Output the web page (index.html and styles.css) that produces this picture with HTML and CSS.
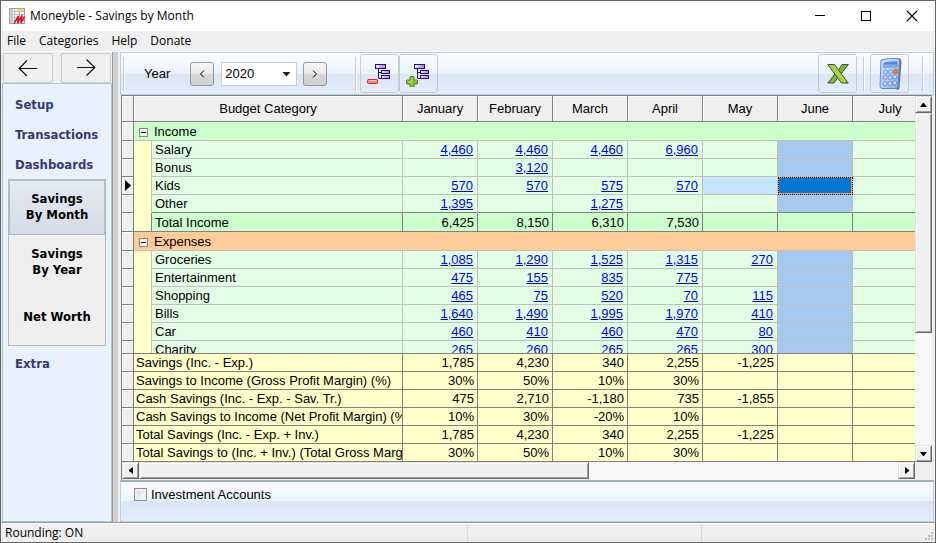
FILE: index.html
```html
<!DOCTYPE html>
<html lang="en">
<head>
<meta charset="utf-8">
<title>Moneyble - Savings by Month</title>
<link rel="stylesheet" href="styles.css">
</head>
<body>
<div class="window">
  <header class="titlebar">
    <svg class="app-icon" width="16" height="16" viewBox="0 0 16 16">
      <rect x="0.5" y="0.5" width="15" height="15" fill="#f4f4f4" stroke="#a0a4a8"/>
      <path d="M1 3.5h14M1 6.5h14M1 9.5h14M1 12.5h14M5.500 1v14M10.500 1v14" stroke="#b8bcc0" fill="none"/>
      <path d="M1 1h3v14h-3z" fill="#c5c9cc"/>
      <path d="M8 1h7v2h-7z" fill="#ffd35a"/>
      <path d="M5 15.500L9.500 8L8.500 15L13 7.500L12 15L15.500 8.500" stroke="#d8151b" stroke-width="1.500" fill="none"/>
    </svg>
    <h1>Moneyble - Savings by Month</h1>
    <div class="window-controls">
      <button aria-label="Minimize"><svg width="12" height="12"><path d="M1 5.500h10" stroke="#000"/></svg></button>
      <button aria-label="Maximize"><svg width="12" height="12"><rect x="1.500" y="1.500" width="9" height="9" fill="none" stroke="#000"/></svg></button>
      <button aria-label="Close"><svg width="12" height="12"><path d="M1 1l10 10M11 1l-10 10" stroke="#000" stroke-width="1.100"/></svg></button>
    </div>
  </header>
  <nav class="menubar">
    <button>File</button><button>Categories</button><button>Help</button><button>Donate</button>
  </nav>

  <div class="workspace">
    <aside class="sidebar">
      <div class="history">
        <button aria-label="Back"><svg width="20" height="18" viewBox="0 0 20 18"><path d="M19 9.500H1.500M9 1.500L1.200 9.500L9 17" fill="none" stroke="#111" stroke-width="1.200"/></svg></button>
        <button aria-label="Forward"><svg width="20" height="18" viewBox="0 0 20 18"><path d="M1 8.500H18.500M10.500 0.500L18.800 8.500L10.500 16.500" fill="none" stroke="#111" stroke-width="1.200"/></svg></button>
      </div>
      <nav class="sections">
        <a class="section" href="#setup">Setup</a>
        <a class="section" href="#transactions">Transactions</a>
        <a class="section" href="#dashboards">Dashboards</a>
        <div class="pages">
          <a class="page active" href="#month">Savings<br>By Month</a>
          <a class="page" href="#year">Savings<br>By Year</a>
          <a class="page" href="#worth">Net Worth</a>
        </div>
        <a class="section" href="#extra">Extra</a>
      </nav>
    </aside>
    <div class="splitter"></div>

    <main class="main">
      <div class="toolbar">
        <span class="divider"></span>
        <label for="year">Year</label>
        <button class="step" aria-label="Previous year"><svg width="6" height="8"><path d="M5 0.500L1.500 4L5 7.500" fill="none" stroke="#000"/></svg></button>
        <div class="year-box">
          <select id="year"><option>2020</option></select>
          <svg class="caret" width="9" height="5"><path d="M0.500 0h8l-4 4.500z" fill="#222"/></svg>
        </div>
        <button class="step" aria-label="Next year"><svg width="6" height="8"><path d="M1 0.500L4.500 4L1 7.500" fill="none" stroke="#000"/></svg></button>
        <span class="divider before-tools"></span>
        <button class="tool" aria-label="Collapse all">
          <svg width="26" height="26" viewBox="0 0 26 26">
            <defs><linearGradient id="node"><stop offset="0" stop-color="#f2edff"/><stop offset="1" stop-color="#9d82ea"/></linearGradient></defs>
            <path d="M11.500 7v10.500h3M11.500 11.500h3" fill="none" stroke="#241080"/>
            <g fill="url(#node)" stroke="#241080"><rect x="8.500" y="3.500" width="10" height="4"/><rect x="14.500" y="9.500" width="8" height="3"/><rect x="14.500" y="14.500" width="8" height="3"/></g>
            <rect x="0.500" y="18.500" width="10" height="4" rx="1" fill="#ee9278" stroke="#f01818"/><path d="M2 19.500h7" stroke="#f9cfaa"/>
          </svg>
        </button>
        <button class="tool" aria-label="Expand all">
          <svg width="26" height="26" viewBox="0 0 26 26">
            <path d="M11.500 7v10.500h3M11.500 11.500h3" fill="none" stroke="#241080"/>
            <g fill="url(#node)" stroke="#241080"><rect x="8.500" y="3.500" width="10" height="4"/><rect x="14.500" y="9.500" width="8" height="3"/><rect x="14.500" y="14.500" width="8" height="3"/></g>
            <path d="M4.500 15.500h3l.5.500v3h3l.5.500v3l-.5.500h-3v2.500l-.5.500h-3l-.5-.5v-2.500h-3l-.5-.5v-3l.5-.5h3v-3z" fill="#8dc32c" stroke="#41801a"/><path d="M5.500 17v4h-3.500" fill="none" stroke="#b8e060"/>
          </svg>
        </button>
        <button class="tool push" aria-label="Export to Excel">
          <svg width="22" height="20" viewBox="0 0 22 20">
            <path d="M15 0.500h6.300l-6.500 8.500h-5z" fill="#79b83a" stroke="#3e5a2c"/>
            <path d="M0.800 19L8 10h5.500L7 19z" fill="#79b83a" stroke="#3e5a2c"/>
            <path d="M0.800 0.500H7.500L21.200 19H14.500z" fill="#a2d83e" stroke="#44513c"/>
          </svg>
        </button>
        <span class="divider"></span>
        <button class="tool" aria-label="Calculator">
          <svg width="24" height="34" viewBox="0 0 24 34">
            <defs><linearGradient id="calc" x2="1" y2="1"><stop offset="0" stop-color="#d9e8ff"/><stop offset="1" stop-color="#86abe9"/></linearGradient>
            <linearGradient id="lcd" x2="0" y2="1"><stop offset="0" stop-color="#2f6fe2"/><stop offset="1" stop-color="#a9d0ff"/></linearGradient></defs>
            <path d="M21 2q1.500 .5 1.500 3L20.500 31q-.5 1-2 1" fill="none" stroke="#66748e" stroke-width="2"/>
            <path d="M3 3q9-2.500 17-1.500q1.500.5 1.500 3L20 30q-.5 1.500-2 1.500L4 31.500q-2-.5-2-2z" fill="url(#calc)" stroke="#5f8ad2"/>
            <path d="M6 6q7-1.500 13-1v5q-6-.5-13.300.5z" fill="url(#lcd)" stroke="#5585cf" stroke-width=".8"/>
            <g fill="#c4dafc" stroke="#5d84ca" stroke-width=".8"><circle cx="7.500" cy="15" r="2"/><circle cx="12.500" cy="15" r="2"/><circle cx="7.200" cy="20.500" r="2"/><circle cx="12.200" cy="20.500" r="2"/><circle cx="17" cy="20" r="2"/><circle cx="7" cy="26.500" r="2"/><circle cx="12" cy="26.500" r="2"/><circle cx="16.800" cy="26" r="2"/></g>
            <circle cx="17.500" cy="14.500" r="2.200" fill="#f07838" stroke="#d0602c" stroke-width=".8"/>
          </svg>
        </button>
        <span class="divider last"></span>
      </div>

      <div class="grid">
        <div class="panes">
          <div class="tables">
            <div class="rows">
              <table>
                <colgroup><col class="c-ind"><col class="c-tree"><col class="c-name"><col class="c-m"><col class="c-m"><col class="c-m"><col class="c-m"><col class="c-m"><col class="c-m"><col></colgroup>
                <thead>
                  <tr><td class="ind"></td><th colspan="2">Budget Category</th><th>January</th><th>February</th><th>March</th><th>April</th><th>May</th><th>June</th><th>July</th></tr>
                </thead>
                <tbody>
                  <tr class="group income"><td class="ind"></td><td colspan="9"><button class="toggle" aria-label="Collapse Income"></button>Income</td></tr>
                  <tr class="item"><td class="ind"></td><td></td><td>Salary</td><td><a href="#e">4,460</a></td><td><a href="#e">4,460</a></td><td><a href="#e">4,460</a></td><td><a href="#e">6,960</a></td><td></td><td></td><td></td></tr>
                  <tr class="item"><td class="ind"></td><td></td><td>Bonus</td><td></td><td><a href="#e">3,120</a></td><td></td><td></td><td></td><td></td><td></td></tr>
                  <tr class="item"><td class="ind"><svg width="6" height="11"><path d="M0 0l6 5.500l-6 5.500z"/></svg></td><td></td><td>Kids</td><td><a href="#e">570</a></td><td><a href="#e">570</a></td><td><a href="#e">575</a></td><td><a href="#e">570</a></td><td class="near"></td><td class="focused"></td><td></td></tr>
                  <tr class="item before-total"><td class="ind"></td><td></td><td>Other</td><td><a href="#e">1,395</a></td><td></td><td><a href="#e">1,275</a></td><td></td><td></td><td></td><td></td></tr>
                  <tr class="total"><td class="ind"></td><td></td><td>Total Income</td><td>6,425</td><td>8,150</td><td>6,310</td><td>7,530</td><td></td><td></td><td></td></tr>
                  <tr class="group expenses"><td class="ind"></td><td colspan="9"><button class="toggle" aria-label="Collapse Expenses"></button>Expenses</td></tr>
                  <tr class="item"><td class="ind"></td><td></td><td>Groceries</td><td><a href="#e">1,085</a></td><td><a href="#e">1,290</a></td><td><a href="#e">1,525</a></td><td><a href="#e">1,315</a></td><td><a href="#e">270</a></td><td></td><td></td></tr>
                  <tr class="item"><td class="ind"></td><td></td><td>Entertainment</td><td><a href="#e">475</a></td><td><a href="#e">155</a></td><td><a href="#e">835</a></td><td><a href="#e">775</a></td><td></td><td></td><td></td></tr>
                  <tr class="item"><td class="ind"></td><td></td><td>Shopping</td><td><a href="#e">465</a></td><td><a href="#e">75</a></td><td><a href="#e">520</a></td><td><a href="#e">70</a></td><td><a href="#e">115</a></td><td></td><td></td></tr>
                  <tr class="item"><td class="ind"></td><td></td><td>Bills</td><td><a href="#e">1,640</a></td><td><a href="#e">1,490</a></td><td><a href="#e">1,995</a></td><td><a href="#e">1,970</a></td><td><a href="#e">410</a></td><td></td><td></td></tr>
                  <tr class="item"><td class="ind"></td><td></td><td>Car</td><td><a href="#e">460</a></td><td><a href="#e">410</a></td><td><a href="#e">460</a></td><td><a href="#e">470</a></td><td><a href="#e">80</a></td><td></td><td></td></tr>
                  <tr class="item"><td class="ind"></td><td></td><td>Charity</td><td><a href="#e">265</a></td><td><a href="#e">260</a></td><td><a href="#e">265</a></td><td><a href="#e">265</a></td><td><a href="#e">300</a></td><td></td><td></td></tr>
                </tbody>
              </table>
            </div>
            <div class="summary">
              <table>
                <colgroup><col class="c-ind"><col class="c-wide"><col class="c-m"><col class="c-m"><col class="c-m"><col class="c-m"><col class="c-m"><col class="c-m"><col></colgroup>
                <tbody>
                  <tr><td class="ind"></td><td>Savings (Inc. - Exp.)</td><td>1,785</td><td>4,230</td><td>340</td><td>2,255</td><td>-1,225</td><td></td><td></td></tr>
                  <tr><td class="ind"></td><td>Savings to Income (Gross Profit Margin) (%)</td><td>30%</td><td>50%</td><td>10%</td><td>30%</td><td></td><td></td><td></td></tr>
                  <tr><td class="ind"></td><td>Cash Savings (Inc. - Exp. - Sav. Tr.)</td><td>475</td><td>2,710</td><td>-1,180</td><td>735</td><td>-1,855</td><td></td><td></td></tr>
                  <tr><td class="ind"></td><td>Cash Savings to Income (Net Profit Margin) (%)</td><td>10%</td><td>30%</td><td>-20%</td><td>10%</td><td></td><td></td><td></td></tr>
                  <tr><td class="ind"></td><td>Total Savings (Inc. - Exp. + Inv.)</td><td>1,785</td><td>4,230</td><td>340</td><td>2,255</td><td>-1,225</td><td></td><td></td></tr>
                  <tr><td class="ind"></td><td>Total Savings to (Inc. + Inv.) (Total Gross Margin)</td><td>30%</td><td>50%</td><td>10%</td><td>30%</td><td></td><td></td><td></td></tr>
                </tbody>
              </table>
            </div>
          </div>
          <div class="scroll vertical">
            <button aria-label="Scroll up"><svg width="7" height="4"><path d="M3 0h1l3 4h-7z"/></svg></button>
            <div class="thumb"></div>
            <div class="track"></div>
            <button aria-label="Scroll down"><svg width="7" height="4"><path d="M0 0h7l-3 4h-1z"/></svg></button>
          </div>
        </div>
        <div class="scroll horizontal">
          <button aria-label="Scroll left"><svg width="4" height="7"><path d="M4 0v7l-4-3v-1z"/></svg></button>
          <div class="thumb"></div>
          <div class="track"></div>
          <button aria-label="Scroll right"><svg width="4" height="7"><path d="M0 0v7l4-3v-1z"/></svg></button>
          <div class="corner"></div>
        </div>
      </div>

      <div class="options">
        <label><input type="checkbox">Investment Accounts</label>
      </div>
    </main>
  </div>

  <footer class="statusbar">
    <span>Rounding: ON</span><span></span><span></span>
    <svg class="grip" width="9" height="9"><path d="M6 0h2v2h-2zM3 3h2v2h-2zM6 3h2v2h-2zM0 6h2v2h-2zM3 6h2v2h-2zM6 6h2v2h-2z" fill="#bcbcbc"/></svg>
  </footer>
</div>
</body>
</html>
```
FILE: styles.css
```css
* { box-sizing: border-box; }
body { margin: 0; font: 13px/17px "Liberation Sans", Arial, sans-serif; color: #000; }
button { font: inherit; color: inherit; padding: 0; margin: 0; border: 0; background: none; }
svg { display: block; flex: none; }
a { color: inherit; text-decoration: none; }

.window { height: 100vh; display: flex; flex-direction: column; border: 1px solid #666; background: #efefef; overflow: hidden; }

.titlebar { display: flex; align-items: center; height: 30px; flex: none; padding-left: 8px; background: #fff; }
.titlebar h1 { margin: 0 0 0 5px; flex: 1; font: 12px/16px "Open Sans", sans-serif; }
.window-controls { display: flex; height: 100%; }
.window-controls button { width: 46px; display: flex; align-items: center; justify-content: center; }

.menubar { display: flex; height: 21px; flex: none; padding-left: 6px; gap: 13px; border-bottom: 1px solid #fff; font: 12px/20px "Open Sans", sans-serif; }

.workspace { display: flex; flex: 1; min-height: 0; border-bottom: 1px solid #9a9a9a; }

.sidebar { width: 111px; flex: none; display: flex; flex-direction: column; border-left: 1px solid #e4e4e4; }
.history { display: flex; justify-content: space-between; height: 31px; padding: 1px 1px 0; }
.history button { width: 50px; height: 30px; display: flex; align-items: center; justify-content: center; border: 1px solid #ccc; border-radius: 2px; background: #f0f0f0; }
.sections { flex: 1; padding: 5px 5px 0; border: 1px solid #acc8d0; background: #e8f1fe; font: bold 13px/16px "DejaVu Sans Condensed", "DejaVu Sans", sans-serif; }
.section { display: block; padding: 8px 7px 6px; color: #343a78; }
.pages { margin-bottom: 2px; border: 1px solid #b8b8b8; background: #efefef; }
.page { display: flex; height: 55px; padding-bottom: 2px; align-items: center; justify-content: center; text-align: center; }
.page.active { border: 1px solid #b4bbc9; background: linear-gradient(#e6eaf0, #d4dbe8); }

.splitter { width: 6px; flex: none; background: #cdcdcd; border-left: 1px solid #999; }
.main { flex: 1; min-width: 0; display: flex; flex-direction: column; margin: 0 1px 0 2px; }

.toolbar { display: flex; align-items: center; height: 43px; flex: none; border: 1px solid #b3d2d9; background: linear-gradient(#fdfeff, #eaf3fb 50%, #dae6f5 50%, #e3eefc); }
.divider { width: 2px; height: 34px; flex: none; background: #c8ccd2; border-right: 1px solid #fff; margin-left: 2px; }
.toolbar label { margin: 0 20px 0 19px; }
.step { width: 24px; height: 24px; flex: none; display: flex; align-items: center; justify-content: center; border: 1px solid #999; border-radius: 3px; background: linear-gradient(#f6f6f6, #eaeaea 50%, #d8d8d8 50%, #cfcfcf); }
.year-box { position: relative; margin: 0 6px 0 7px; }
.year-box select { display: block; width: 76px; height: 24px; padding: 0 3px; appearance: none; border: 1px solid #ccc; border-radius: 0; background: #fff; font: inherit; color: #000; }
.caret { position: absolute; right: 6px; top: 10px; pointer-events: none; }
.before-tools { margin: 0 3px 0 28px; }
.tool { width: 39px; height: 39px; flex: none; display: flex; align-items: center; justify-content: center; border: 1px solid #c4ccd4; border-radius: 3px; }
.tool.push { margin: 0 4px 0 auto; }
.push + .divider { margin-right: 5px; }
.divider.last { margin: 0 9px 0 13px; }

.grid { flex: 1; min-height: 0; display: flex; flex-direction: column; border: 1px solid #808080; border-width: 1px 0 0 1px; margin: 0 2px 0 1px; }
.panes { flex: 1; min-height: 0; display: flex; }
.tables { flex: 1; min-width: 0; display: flex; flex-direction: column; }
.rows { flex: 1; min-height: 0; overflow: hidden; background: #ffffc9; }
.summary { overflow: hidden; border-top: 1px solid #808080; }

table { width: 100%; min-width: 806px; table-layout: fixed; border-collapse: separate; border-spacing: 0; }
.c-ind { width: 12px; }
.c-tree { width: 18px; }
.c-name { width: 251px; }
.c-wide { width: 269px; }
.c-m { width: 75px; }
th, td { height: 18px; padding: 0 3px; overflow: hidden; white-space: nowrap; text-align: right; font-weight: normal; border: 0 solid #808080; border-width: 0 1px 1px 0; }
td.ind { padding: 0; background: #efefef; border-color: #808080; box-shadow: inset 1px 1px #fff; }
td.ind svg { margin-left: 3px; }
thead th { height: 26px; text-align: center; background: #efefef; box-shadow: inset 1px 1px #fff; }

.group td { height: 19px; text-align: left; padding-left: 5px; border-right-width: 0; }
.group td.ind, .total td.ind { padding: 0; border-right-width: 1px; }
.income td:last-child { background: #cfc; border-bottom-color: #c0c0c0; }
.expenses td:last-child { background: #fc9; border-bottom-color: #c0c0c0; }
.toggle { width: 9px; height: 9px; margin-right: 6px; vertical-align: 0; border: 1px solid #888; background: linear-gradient(#000, #000) center / 5px 1px no-repeat #fff; }

.item td { background: #e3ffe3; border-color: #c0c0c0; }
.item td.ind { background: #efefef; border-color: #808080; }
.item td:nth-child(2), .total td:nth-child(2) { background: #ffffc9; border-bottom-color: #ffffc9; }
.item td:nth-child(3), .total td:nth-child(3) { text-align: left; }
.item td:nth-child(9) { background: #a6c9ef; }
.item td.near { background: #c3e6fa; }
.item td.focused { background: #0078d7; box-shadow: inset 0 0 0 1px #ff9a4a; outline: 1px dotted #000; outline-offset: -1px; }
.item a { color: #00f; text-decoration: underline; margin-right: 1px; }
.before-total td:nth-child(n+3) { border-bottom-color: #808080; }
.total td { height: 19px; background: #cfc; }
.total td.ind { background: #efefef; }
.total td:nth-child(2) { border-bottom-color: #808080; }

.summary td { background: #ffffc9; line-height: 16px; padding-top: 1px; }
.summary td.ind { background: #efefef; }
.summary td:nth-child(2) { text-align: left; padding: 1px 0 0 2px; }

.scroll { display: flex; flex: none; }
.scroll button, .thumb { flex: none; border: 1px solid; border-color: #e3e3e3 #696969 #696969 #e3e3e3; box-shadow: inset 1px 1px #fff, inset -1px -1px #a0a0a0; background: #f0f0f0; }
.scroll button { width: 17px; height: 17px; display: flex; align-items: center; justify-content: center; }
.track { flex: 1; background: repeating-conic-gradient(#fff 0 25%, #f0f0f0 0 50%) 0 0 / 2px 2px; }
.vertical { flex-direction: column; width: 17px; }
.vertical .thumb { height: 60%; }
.horizontal { height: 18px; }
.horizontal .thumb { width: 55.5%; height: 17px; }
.corner { width: 17px; }

.options { height: 42px; flex: none; border: 1px solid #b3d2d9; border-top: 2px solid #9fb3ba; background: linear-gradient(#fdfeff, #eaf3fb 50%, #dae6f5 50%, #e3eefc); padding: 4px 13px; }
.options label { display: flex; align-items: center; gap: 4px; }
.options input { appearance: none; width: 13px; height: 13px; margin: 0; border: 1px solid #8e8f8f; background: linear-gradient(135deg, #cfd3d8, #fff); box-shadow: inset 0 0 0 2px #f0f0f0; }

.statusbar { display: flex; position: relative; height: 19px; flex: none; border-top: 1px solid #fff; font: 12px/18px "Open Sans", sans-serif; }
.statusbar span { flex: 1; padding-left: 4px; border-right: 1px solid #d9d9d9; }
.statusbar span:nth-child(1) { flex: 0 0 50%; }
.statusbar span:nth-child(3) { border-right: 0; }
.grip { position: absolute; right: 1px; bottom: 1px; }
```
